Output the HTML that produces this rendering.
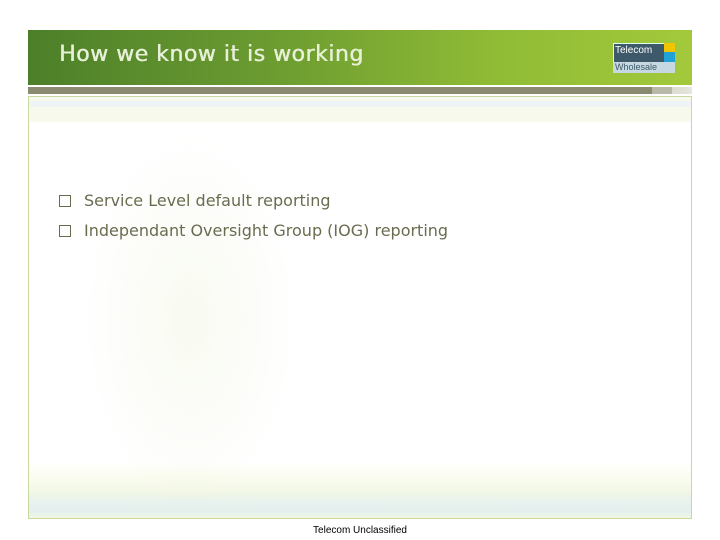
<!DOCTYPE html>
<html><head><style>
body{margin:0;width:720px;height:540px;background:#fff;position:relative;overflow:hidden;font-family:"DejaVu Sans","Liberation Sans",sans-serif}
.hdr{position:absolute;left:28px;top:30px;width:664px;height:55px;background:linear-gradient(90deg,#4d7f2a 0%,#6a9a30 35%,#8fbb35 70%,#a3c93b 100%)}
.hdr h1{margin:0;position:absolute;left:31px;top:12px;font-size:22px;font-weight:normal;color:#e8f0d8;letter-spacing:0.5px;text-shadow:0.5px 0 0 #e8f0d8}
.bar{position:absolute;left:28px;top:87px;width:664px;height:7px;background:linear-gradient(90deg,#8a8a70 0%,#8a8a70 94%,#b8b8a8 94%,#b8b8a8 97%,#dcdcd0 97%,#e6e6dc 100%)}
.box{position:absolute;left:28px;top:96px;width:662px;height:421px;border:1px solid #c8d8a0;background:linear-gradient(180deg,#f6f9ec 0,#f6f9ec 4px,#eef4f6 4px,#eef4f6 10px,#f6f9ec 10px,#f6f9ec 24px,#fff 26px,#fff 365px,#fafcf0 380px,#f2f7e6 395px,#e8f2ee 405px,#e4f0ee 415px,#eef5e4 420px)}
.sw{position:absolute;left:80px;top:130px;width:220px;height:380px;border-radius:50%;background:radial-gradient(ellipse at center,rgba(235,242,215,.35),rgba(255,255,255,0) 70%)}
.li{position:absolute;left:59px;font-size:16px;color:#6b6b50}
.li span{display:inline-block;width:10px;height:10px;border:1.5px solid #6b6b50;margin-right:13px;vertical-align:-1px}
.logo{position:absolute;left:613px;top:43px;width:62px;height:30px}
.ft{position:absolute;left:0;width:720px;top:525px;text-align:center;font-family:"Liberation Sans",sans-serif;font-size:10px;color:#000}
</style></head><body>
<div class="hdr"><h1>How we know it is working</h1></div>
<div class="logo">
<div style="position:absolute;left:0;top:0;width:50px;height:18px;background:#3e5a6a;border:1px solid #dfe;"></div>
<div style="position:absolute;left:2px;top:2px;font-size:10px;color:#fff;font-family:'Liberation Sans',sans-serif">Telecom</div>
<div style="position:absolute;left:51px;top:0;width:11px;height:9px;background:#f2c400"></div>
<div style="position:absolute;left:51px;top:9px;width:11px;height:10px;background:#22a0d8"></div>
<div style="position:absolute;left:0;top:19px;width:62px;height:11px;background:#c6d8e2"></div>
<div style="position:absolute;left:2px;top:19px;font-size:9px;color:#3e5a6a;font-family:'Liberation Sans',sans-serif">Wholesale</div>
</div>
<div class="bar"></div>
<div class="box"></div>
<div class="sw"></div>
<div class="li" style="top:191px"><span></span>Service Level default reporting</div>
<div class="li" style="top:221px"><span></span>Independant Oversight Group (IOG) reporting</div>
<div class="ft">Telecom Unclassified</div>
</body></html>
